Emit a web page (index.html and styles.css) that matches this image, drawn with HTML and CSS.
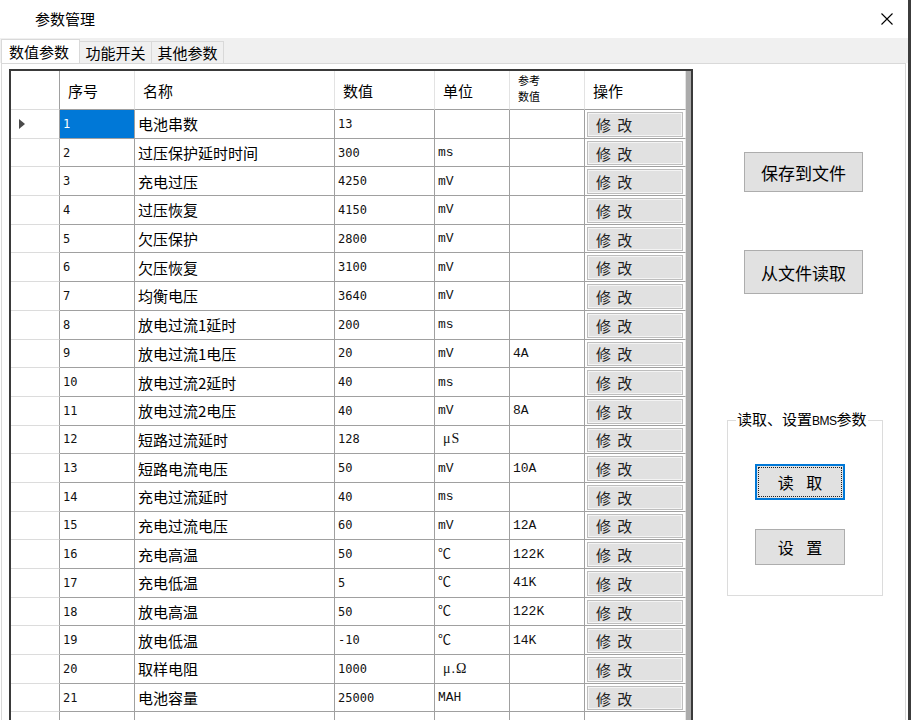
FILE: index.html
```html
<!DOCTYPE html>
<html lang="zh-CN">
<head>
<meta charset="utf-8">
<title>参数管理</title>
<link rel="stylesheet" href="styles.css">
</head>
<body>
<div class="window">
  <div class="titlebar">
    <span class="title">参数管理</span>
    <svg class="close" width="12" height="12" viewBox="0 0 12 12"><path d="M0.5 0.5 L11.5 11.5 M11.5 0.5 L0.5 11.5" stroke="#000" stroke-width="1.1" fill="none"/></svg>
  </div>
  <div class="tabstrip">
    <div class="tab active">数值参数</div>
    <div class="tab">功能开关</div>
    <div class="tab">其他参数</div>
  </div>
  <div class="panel">
    <div class="gridbox">
      <div class="grid">
        <div class="hc rh"></div>
        <div class="hc">序号</div>
        <div class="hc">名称</div>
        <div class="hc">数值</div>
        <div class="hc">单位</div>
        <div class="hc two"><span>参考</span><span>数值</span></div>
        <div class="hc">操作</div>

        <div class="rh"><span class="arrow"></span></div><div class="c sel num">1</div><div class="c name">电池串数</div><div class="c num">13</div><div class="c unit"></div><div class="c unit"></div><div class="c op"><span class="mod">修 改</span></div>
        <div class="rh"></div><div class="c num">2</div><div class="c name">过压保护延时时间</div><div class="c num">300</div><div class="c unit">ms</div><div class="c unit"></div><div class="c op"><span class="mod">修 改</span></div>
        <div class="rh"></div><div class="c num">3</div><div class="c name">充电过压</div><div class="c num">4250</div><div class="c unit">mV</div><div class="c unit"></div><div class="c op"><span class="mod">修 改</span></div>
        <div class="rh"></div><div class="c num">4</div><div class="c name">过压恢复</div><div class="c num">4150</div><div class="c unit">mV</div><div class="c unit"></div><div class="c op"><span class="mod">修 改</span></div>
        <div class="rh"></div><div class="c num">5</div><div class="c name">欠压保护</div><div class="c num">2800</div><div class="c unit">mV</div><div class="c unit"></div><div class="c op"><span class="mod">修 改</span></div>
        <div class="rh"></div><div class="c num">6</div><div class="c name">欠压恢复</div><div class="c num">3100</div><div class="c unit">mV</div><div class="c unit"></div><div class="c op"><span class="mod">修 改</span></div>
        <div class="rh"></div><div class="c num">7</div><div class="c name">均衡电压</div><div class="c num">3640</div><div class="c unit">mV</div><div class="c unit"></div><div class="c op"><span class="mod">修 改</span></div>
        <div class="rh"></div><div class="c num">8</div><div class="c name">放电过流1延时</div><div class="c num">200</div><div class="c unit">ms</div><div class="c unit"></div><div class="c op"><span class="mod">修 改</span></div>
        <div class="rh"></div><div class="c num">9</div><div class="c name">放电过流1电压</div><div class="c num">20</div><div class="c unit">mV</div><div class="c unit">4A</div><div class="c op"><span class="mod">修 改</span></div>
        <div class="rh"></div><div class="c num">10</div><div class="c name">放电过流2延时</div><div class="c num">40</div><div class="c unit">ms</div><div class="c unit"></div><div class="c op"><span class="mod">修 改</span></div>
        <div class="rh"></div><div class="c num">11</div><div class="c name">放电过流2电压</div><div class="c num">40</div><div class="c unit">mV</div><div class="c unit">8A</div><div class="c op"><span class="mod">修 改</span></div>
        <div class="rh"></div><div class="c num">12</div><div class="c name">短路过流延时</div><div class="c num">128</div><div class="c unit mu">μS</div><div class="c unit"></div><div class="c op"><span class="mod">修 改</span></div>
        <div class="rh"></div><div class="c num">13</div><div class="c name">短路电流电压</div><div class="c num">50</div><div class="c unit">mV</div><div class="c unit">10A</div><div class="c op"><span class="mod">修 改</span></div>
        <div class="rh"></div><div class="c num">14</div><div class="c name">充电过流延时</div><div class="c num">40</div><div class="c unit">ms</div><div class="c unit"></div><div class="c op"><span class="mod">修 改</span></div>
        <div class="rh"></div><div class="c num">15</div><div class="c name">充电过流电压</div><div class="c num">60</div><div class="c unit">mV</div><div class="c unit">12A</div><div class="c op"><span class="mod">修 改</span></div>
        <div class="rh"></div><div class="c num">16</div><div class="c name">充电高温</div><div class="c num">50</div><div class="c unit">℃</div><div class="c unit">122K</div><div class="c op"><span class="mod">修 改</span></div>
        <div class="rh"></div><div class="c num">17</div><div class="c name">充电低温</div><div class="c num">5</div><div class="c unit">℃</div><div class="c unit">41K</div><div class="c op"><span class="mod">修 改</span></div>
        <div class="rh"></div><div class="c num">18</div><div class="c name">放电高温</div><div class="c num">50</div><div class="c unit">℃</div><div class="c unit">122K</div><div class="c op"><span class="mod">修 改</span></div>
        <div class="rh"></div><div class="c num">19</div><div class="c name">放电低温</div><div class="c num">-10</div><div class="c unit">℃</div><div class="c unit">14K</div><div class="c op"><span class="mod">修 改</span></div>
        <div class="rh"></div><div class="c num">20</div><div class="c name">取样电阻</div><div class="c num">1000</div><div class="c unit mu">μ.Ω</div><div class="c unit"></div><div class="c op"><span class="mod">修 改</span></div>
        <div class="rh"></div><div class="c num">21</div><div class="c name">电池容量</div><div class="c num">25000</div><div class="c unit">MAH</div><div class="c unit"></div><div class="c op"><span class="mod">修 改</span></div>
        <div class="rh"></div><div class="c"></div><div class="c"></div><div class="c"></div><div class="c"></div><div class="c"></div><div class="c op"></div>
      </div>
    </div>
    <div class="side">
      <button class="bigbtn">保存到文件</button>
      <button class="bigbtn second">从文件读取</button>
      <fieldset class="group">
        <legend>读取、设置<span class="bms">BMS</span>参数</legend>
        <button class="smallbtn focus"><span>读 取</span></button>
        <button class="smallbtn"><span>设 置</span></button>
      </fieldset>
    </div>
  </div>
</div>
</body>
</html>
```
FILE: styles.css
```css
* { box-sizing: border-box; }
html, body { margin: 0; padding: 0; }
body {
  width: 911px;
  height: 720px;
  overflow: hidden;
  background: #fff;
  font-family: "Noto Sans CJK SC", "Noto Sans", sans-serif;
  color: #000;
}
.window {
  width: 911px;
  height: 720px;
  border-right: 3px solid #3c3c3c;
  display: flex;
  flex-direction: column;
}
.titlebar {
  height: 38px;
  flex: none;
  display: flex;
  align-items: center;
  justify-content: space-between;
  padding-left: 35px;
  padding-right: 15px;
  font-size: 15px;
}
.title { line-height: 1; margin-top: -1px; }
.close { display: block; }
.tabstrip {
  height: 25px;
  flex: none;
  background: #f0f0f0;
  display: flex;
  align-items: flex-end;
  padding-left: 1px;
}
.tab {
  height: 22px;
  width: 72px;
  border: 1px solid #d9d9d9;
  border-bottom: none;
  border-left: none;
  font-size: 15px;
  line-height: 1;
  display: flex;
  align-items: center;
  justify-content: center;
  background: #f0f0f0;
}
.tab.active {
  height: 24px;
  width: 79px;
  background: #fff;
  border-left: 1px solid #d9d9d9;
  justify-content: flex-start;
  padding-left: 7px;
}
.panel {
  flex: 1;
  min-height: 0;
  margin: 0 2px 0 1px;
  border: 1px solid #d9d9d9;
  border-bottom: none;
  background: #fff;
  display: flex;
  align-items: flex-start;
}
.gridbox {
  margin: 5px 0 0 7px;
  width: 684px;
  border: 2px solid #3a3a3a;
  border-bottom: none;
  background: #ababab;
  flex: none;
}
.grid {
  width: 675px;
  display: grid;
  grid-template-columns: 49px 75px 200px 100px 75px 75px 101px;
  grid-template-rows: 39px;
  grid-auto-rows: 28.7px;
  background: #fff;
}
.hc {
  border-right: 1px solid #e3e3e3;
  border-bottom: 1px solid #a0a0a0;
  font-size: 15px;
  line-height: 1;
  padding-left: 8px;
  display: flex;
  align-items: center;
  white-space: nowrap;
}
.hc.two {
  flex-direction: column;
  align-items: flex-start;
  justify-content: center;
  font-size: 11px;
  line-height: 16px;
  padding-left: 8px;
  padding-bottom: 4px;
}
.hc.rh { border-right: 1px solid #a0a0a0; }
.rh {
  border-right: 1px solid #a0a0a0;
  border-bottom: 1px solid #dcdcdc;
  display: flex;
  align-items: center;
  padding-left: 8px;
}
.arrow {
  width: 0;
  height: 0;
  border-top: 5px solid transparent;
  border-bottom: 5px solid transparent;
  border-left: 6px solid #4a4a4a;
}
.c {
  border-right: 1px solid #a0a0a0;
  border-bottom: 1px solid #a0a0a0;
  padding-left: 3px;
  display: flex;
  align-items: center;
  white-space: nowrap;
  overflow: hidden;
  line-height: 1;
}
.name { font-size: 15px; }
.num { font-family: "DejaVu Sans Mono", monospace; font-size: 12px; color: #111; }
.unit { font-family: "Liberation Mono", monospace; font-size: 13px; color: #111; }
.unit.mu { padding-left: 8px; font-family: "Liberation Serif", serif; font-size: 14px; letter-spacing: 1px; }
.sel { background: #0078d7; color: #fff; }
.op {
  padding: 2px 2px 1px 2px;
  align-items: stretch;
  border-right-color: #e6e6e6;
}
.mod {
  flex: 1;
  background: #e1e1e1;
  border: 1px solid #bdbdbd;
  box-shadow: inset 0 0 0 1px #f4f4f4;
  font-size: 15px;
  color: #222;
  display: flex;
  align-items: center;
  padding-left: 8px;
  word-spacing: 3px;
  white-space: pre;
  line-height: 1;
}
.side {
  flex: 1;
  display: flex;
  flex-direction: column;
  align-items: flex-start;
  padding-top: 88px;
}
.bigbtn {
  margin-left: 51px;
  width: 119px;
  height: 40px;
  background: #e1e1e1;
  border: 1px solid #adadad;
  font-family: "Noto Sans CJK SC", sans-serif;
  font-size: 17px;
  color: #000;
  padding: 0;
  line-height: 1;
}
.bigbtn.second { margin-top: 58px; height: 44px; }
.group {
  margin: 115px 0 0 34px;
  width: 156px;
  height: 187px;
  border: 1px solid #dcdcdc;
  padding: 0;
  display: flex;
  flex-direction: column;
}
.group legend {
  font-size: 15px;
  line-height: 20px;
  padding: 0 1px;
  margin-left: 8px;
}
.bms { font-family: "Liberation Sans Narrow", "Liberation Sans", sans-serif; font-size: 12px; letter-spacing: -0.5px; }
.smallbtn {
  display: block;
  margin: 33px 0 0 27px;
  width: 90px;
  height: 36px;
  background: #e1e1e1;
  border: 1px solid #adadad;
  font-family: "Noto Sans CJK SC", sans-serif;
  font-size: 16px;
  word-spacing: 9px;
  color: #000;
  padding: 0;
  line-height: 1;
}
.smallbtn + .smallbtn { margin-top: 29px; }
.smallbtn.focus {
  border: 2px solid #0078d7;
  outline: 1px dotted #222;
  outline-offset: -4px;
}
```
